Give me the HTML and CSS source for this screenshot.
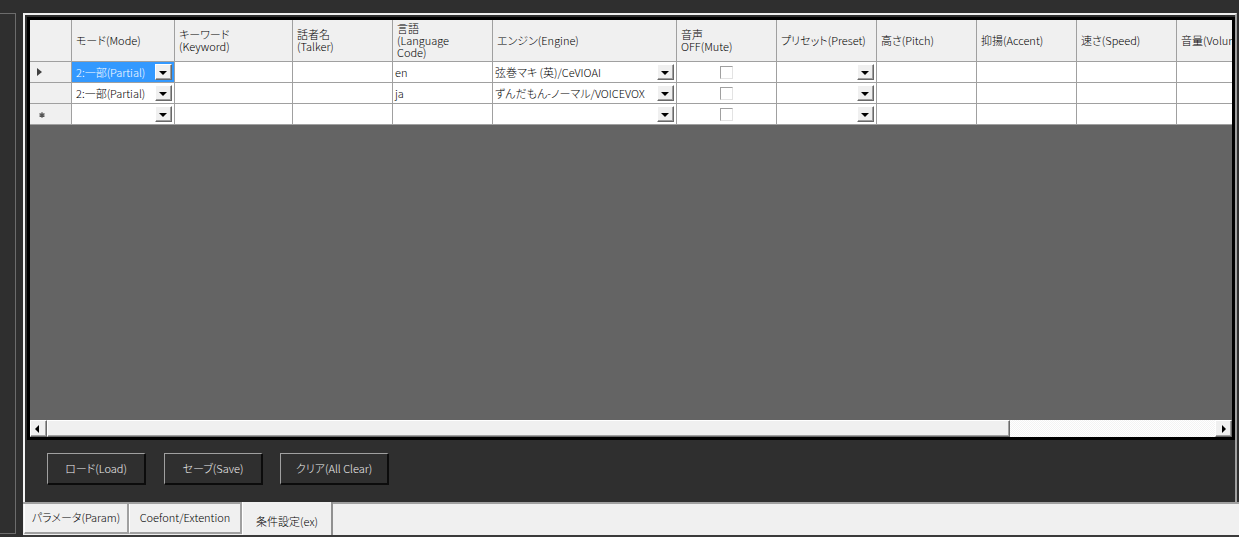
FILE: index.html
```html
<!DOCTYPE html>
<html lang="ja">
<head>
<meta charset="utf-8">
<title>条件設定</title>
<link rel="stylesheet" href="styles.css">
</head>
<body>
<div class="app">
  <div class="side"></div>
  <div class="tabctl">
    <div class="page">
      <div class="dgv">
        <div class="rows">
          <div class="c h rh"></div>
          <div class="c h">モード(Mode)</div>
          <div class="c h">キーワード<br>(Keyword)</div>
          <div class="c h">話者名<br>(Talker)</div>
          <div class="c h">言語<br>(Language<br>Code)</div>
          <div class="c h">エンジン(Engine)</div>
          <div class="c h">音声<br>OFF(Mute)</div>
          <div class="c h">プリセット(Preset)</div>
          <div class="c h">高さ(Pitch)</div>
          <div class="c h">抑揚(Accent)</div>
          <div class="c h">速さ(Speed)</div>
          <div class="c h">音量(Volume)</div>

          <div class="c rh"><span class="cur"></span></div>
          <div class="c combo mode sel"><span class="tx">2:一部(Partial)</span><span class="dd"></span></div>
          <div class="c"></div>
          <div class="c"></div>
          <div class="c">en</div>
          <div class="c combo"><span class="tx">弦巻マキ (英)/CeVIOAI</span><span class="dd"></span></div>
          <div class="c chk"><span class="cb"></span></div>
          <div class="c combo"><span class="dd"></span></div>
          <div class="c"></div>
          <div class="c"></div>
          <div class="c"></div>
          <div class="c"></div>

          <div class="c rh"></div>
          <div class="c combo mode"><span class="tx">2:一部(Partial)</span><span class="dd"></span></div>
          <div class="c"></div>
          <div class="c"></div>
          <div class="c">ja</div>
          <div class="c combo"><span class="tx">ずんだもん-ノーマル/VOICEVOX</span><span class="dd"></span></div>
          <div class="c chk"><span class="cb"></span></div>
          <div class="c combo"><span class="dd"></span></div>
          <div class="c"></div>
          <div class="c"></div>
          <div class="c"></div>
          <div class="c"></div>

          <div class="c rh"><svg class="star" width="6" height="6" viewBox="0 0 6 6"><path d="M3 0.3V5.7M0.5 1.6L5.5 4.4M0.5 4.4L5.5 1.6" stroke="#555" stroke-width="1.3"/></svg></div>
          <div class="c combo mode"><span class="dd"></span></div>
          <div class="c"></div>
          <div class="c"></div>
          <div class="c"></div>
          <div class="c combo"><span class="dd"></span></div>
          <div class="c chk"><span class="cb"></span></div>
          <div class="c combo"><span class="dd"></span></div>
          <div class="c"></div>
          <div class="c"></div>
          <div class="c"></div>
          <div class="c"></div>
        </div>
        <div class="empty"></div>
        <div class="hs">
          <div class="arr left"></div>
          <div class="thumb"></div>
          <div class="track"></div>
          <div class="arr right"></div>
        </div>
      </div>
      <div class="buttons">
        <div class="btn">ロード(Load)</div>
        <div class="btn save">セーブ(Save)</div>
        <div class="btn clear">クリア(All Clear)</div>
      </div>
    </div>
    <div class="strip">
      <div class="tab t1">パラメータ(Param)</div>
      <div class="tab t2">Coefont/Extention</div>
      <div class="tab t3 active">条件設定(ex)</div>
    </div>
  </div>
</div>
</body>
</html>
```
FILE: styles.css
```css
* { box-sizing: border-box; }
html, body { margin: 0; padding: 0; }
body {
  width: 1239px;
  height: 537px;
  overflow: hidden;
  background: #2f2f2f;
  font-family: "Noto Sans CJK JP", "Noto Sans", sans-serif;
  font-feature-settings: "palt";
  font-size: 11px;
  font-weight: 300;
  color: #000;
}
.app { display: flex; height: 537px; }
.side {
  width: 16px;
  height: 521px;
  margin-top: 13px;
  border-top: 1px solid #6c6c6c;
  border-right: 1px solid #6c6c6c;
  border-bottom: 1px solid #6c6c6c;
}
.tabctl {
  margin-left: 7px;
  width: 1216px;
  padding-top: 13px;
  display: flex;
  flex-direction: column;
}
.page {
  width: 1214px;
  height: 489px;
  border-top: 2px solid #f0f0f0;
  border-left: 2px solid #f4f4f4;
  border-right: 2px solid #a0a0a0;
  padding: 2px 0 0 2px;
  display: flex;
  flex-direction: column;
}
.dgv {
  width: 1208px;
  height: 423px;
  border: 3px solid #000;
  background: #646464;
  display: flex;
  flex-direction: column;
  overflow: hidden;
}
.rows {
  display: grid;
  grid-template-columns: 42px 103px 118px 100px 100px 184px 100px 100px 100px 100px 100px 100px;
  grid-template-rows: 42px 21px 21px 21px;
  width: 1202px;
  overflow: hidden;
  flex-shrink: 0;
}
.c {
  background: #fff;
  border-right: 1px solid #a0a0a0;
  border-bottom: 1px solid #a0a0a0;
  display: flex;
  align-items: center;
  white-space: nowrap;
  overflow: hidden;
  padding-left: 2px;
  line-height: 14px;
}
.h {
  background: #f0f0f0;
  padding-left: 4px;
  line-height: 12px;
  padding-bottom: 1px;
}
.rh { background: #f0f0f0; padding-left: 0; }
.cur {
  width: 0; height: 0;
  margin-left: 7px;
  border-left: 5px solid #404040;
  border-top: 4px solid transparent;
  border-bottom: 4px solid transparent;
}
.star { margin-left: 9px; margin-top: 2px; }
.combo { padding-right: 2px; }
.mode { padding-left: 4px; }
.combo .tx { overflow: hidden; }
.sel { background: #3399ff; color: #fff; }
.dd {
  margin-left: auto;
  flex-shrink: 0;
  width: 17px;
  height: 16px;
  background: #f0f0f0;
  border: 1px solid;
  border-color: #fff #696969 #696969 #fff;
  box-shadow: inset -1px -1px 0 #a0a0a0;
  display: flex;
  align-items: center;
  justify-content: center;
}
.dd::before {
  content: "";
  width: 0; height: 0;
  margin: 1px 1px 0 0;
  border-left: 4px solid transparent;
  border-right: 4px solid transparent;
  border-top: 4px solid #000;
}
.chk { justify-content: center; padding-left: 0; }
.cb {
  width: 13px;
  height: 13px;
  background: #fff;
  border: 1px solid;
  border-color: #a0a0a0 #e3e3e3 #e3e3e3 #a0a0a0;
  margin-right: 1px;
}
.empty { flex: 1; }
.hs {
  height: 17px;
  display: flex;
  flex-shrink: 0;
  background: #fff;
}
.arr, .thumb {
  height: 17px;
  background: #f0f0f0;
  border: 1px solid;
  border-color: #fff #696969 #696969 #fff;
  box-shadow: inset -1px -1px 0 #a0a0a0;
}
.arr { width: 17px; display: flex; align-items: center; justify-content: center; }
.arr::before { content: ""; width: 0; height: 0; border-top: 4px solid transparent; border-bottom: 4px solid transparent; }
.left::before { border-right: 4px solid #000; margin-right: 3px; }
.right::before { border-left: 4px solid #000; margin-left: 1px; }
.thumb { width: 963px; }
.track {
  flex: 1;
  background: repeating-conic-gradient(#ffffff 0 25%, #f3f3f3 0 50%) 0 0 / 2px 2px;
}
.buttons {
  display: flex;
  margin-top: 13px;
  padding-left: 20px;
}
.btn {
  width: 99px;
  height: 32px;
  background: #2f2f2f;
  color: #f0f0f0;
  border-style: solid;
  border-width: 1px 2px 2px 1px;
  border-color: #a0a0a0 #0c0c0c #0c0c0c #a0a0a0;
  display: flex;
  align-items: center;
  justify-content: center;
  padding-bottom: 1px;
}
.save { margin-left: 18px; }
.clear { margin-left: 17px; width: 109px; }
.strip {
  width: 1216px;
  height: 35px;
  background: #f0f0f0;
  border-top: 2px solid #a0a0a0;
  border-bottom: 2px solid #3a3a3a;
  display: flex;
  align-items: flex-start;
  padding-left: 1px;
}
.tab {
  height: 30px;
  background: #f0f0f0;
  border-left: 1px solid #fff;
  border-right: 2px solid #a0a0a0;
  border-bottom: 2px solid #a0a0a0;
  display: flex;
  align-items: center;
  justify-content: center;
  padding-bottom: 3px;
}
.t1 { width: 105px; }
.t2 { width: 113px; }
.t3 { width: 91px; }
.active {
  margin-top: -2px;
  height: 33px;
  border-left: 1px solid #fff;
  border-right: 2px solid #909090;
  border-bottom: none;
  padding-bottom: 0;
  padding-top: 4px;
}
```
